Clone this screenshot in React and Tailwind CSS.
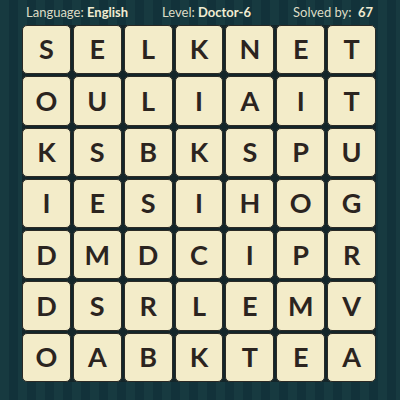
const rows = [
  "SELKNET",
  "OULIAIT",
  "KSBKSPU",
  "IESIHOG",
  "DMDCIPR",
  "DSRLEMV",
  "OABKTEA",
];

export default function App() {
  return (
    <div
      className="w-[400px] h-[400px] overflow-hidden bg-[repeating-linear-gradient(90deg,#173a40_0px,#173a40_9px,#12323a_9px,#12323a_18px)]"
      style={{ fontFamily: "Lato, 'Noto Sans', sans-serif" }}
    >
      <div className="h-[25px] flex items-center text-[13px] text-[#dcdcc6] pl-[26px] pr-[27px]">
        <span>
          Language: <span className="font-bold text-[#f0ecd2]">English</span>
        </span>
        <span className="ml-[34px]">
          Level: <span className="font-bold text-[#f0ecd2]">Doctor-6</span>
        </span>
        <span className="ml-auto">
          Solved by: <span className="font-bold text-[#f0ecd2] ml-[3px]">67</span>
        </span>
      </div>
      <div className="ml-[22px] w-[354px] h-[357px] grid grid-cols-7 grid-rows-7 gap-[2px] bg-[#14262a] rounded-[6px]">
        {rows.map((r, i) =>
          r.split("").map((ch, j) => (
            <div
              key={`${i}-${j}`}
              className="flex items-center justify-center rounded-[5px] bg-[#f3ecc9] border border-[#2a2a25] text-[27px] font-bold text-[#2b241f]"
            >
              {ch}
            </div>
          ))
        )}
      </div>
    </div>
  );
}
